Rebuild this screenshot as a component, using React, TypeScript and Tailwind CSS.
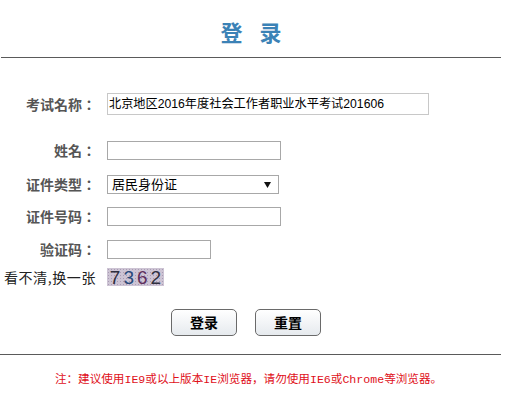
import React from "react";

const cjk = '"Noto Sans CJK SC", "Liberation Sans", sans-serif';
const labelFont = '"Noto Sans CJK TC", "Noto Sans CJK SC", sans-serif';
const fieldFont = '"Liberation Sans", "Noto Sans CJK SC", sans-serif';

const Label: React.FC<{ text: string; bold?: boolean }> = ({ text, bold = true }) => (
  <div
    className={`w-[96px] shrink-0 text-right text-[14px] leading-none whitespace-nowrap ${
      bold ? "font-bold text-[#555]" : "tracking-[0.6px] text-[#222]"
    }`}
    style={{ fontFamily: labelFont }}
  >
    {text}
  </div>
);

const Captcha: React.FC = () => (
  <div className="flex h-[18px] w-[57px] items-center justify-center bg-[#cdc4d4] bg-[radial-gradient(#a99bb4_1px,transparent_1px)] bg-[length:3px_3px] font-['Liberation_Sans'] text-[19px] leading-none tracking-[3px] pl-[3px]">
    <span className="text-[#2e2e3e]">7</span>
    <span className="text-[#28497a]">3</span>
    <span className="text-[#5e2f5c]">6</span>
    <span className="text-[#30303f]">2</span>
  </div>
);

export default function App() {
  return (
    <div className="w-[510px] h-[397px] bg-white" style={{ fontFamily: cjk }}>
      {/* 标题 */}
      <div className="ml-[1px] flex h-[58px] w-[500px] items-center justify-center gap-[17px] border-b border-[#5a5a5a] pt-[5px] text-[22px] font-bold text-[#3b82b6]">
        <span>登</span>
        <span>录</span>
      </div>

      {/* 表单 */}
      <div className="flex flex-col">
        <div className="mt-[35px] flex h-[22px] items-center gap-[11px]">
          <Label text="考试名称：" />
          <div
            className="flex h-[22px] w-[322px] items-center border border-[#c8c8c8] pl-[1px] text-[12.2px] text-black"
            style={{ fontFamily: fieldFont }}
          >
            北京地区2016年度社会工作者职业水平考试201606
          </div>
        </div>

        <div className="mt-[26px] flex h-[18px] items-center gap-[11px]">
          <Label text="姓名：" />
          <div className="h-[19px] w-[174px] border border-[#a8a8a8]" />
        </div>

        <div className="mt-[16px] flex h-[18px] items-center gap-[11px]">
          <Label text="证件类型：" />
          <div className="flex h-[19px] w-[172px] items-center justify-between border border-[#a8a8a8] pl-[4px] pr-[7px] text-[13px] text-black">
            <span>居民身份证</span>
            <svg width="7" height="7" viewBox="0 0 7 7">
              <path d="M0 1 H7 L3.5 7 Z" fill="#111" />
            </svg>
          </div>
        </div>

        <div className="mt-[14px] flex h-[18px] items-center gap-[11px]">
          <Label text="证件号码：" />
          <div className="h-[19px] w-[174px] border border-[#a8a8a8]" />
        </div>

        <div className="mt-[15px] flex h-[18px] items-center gap-[11px]">
          <Label text="验证码：" />
          <div className="h-[19px] w-[104px] border border-[#a8a8a8]" />
        </div>

        <div className="mt-[10px] flex h-[18px] items-center gap-[11px]">
          <Label text="看不清,换一张" bold={false} />
          <Captcha />
        </div>

        <div className="mt-[23px] flex gap-[18px] pl-[171px]">
          <button className="h-[27px] w-[66px] rounded-[5px] border border-[#6a6a6a] bg-gradient-to-b from-white to-[#e6eaee] text-[14px] font-bold text-black">
            登录
          </button>
          <button className="h-[27px] w-[66px] rounded-[5px] border border-[#6a6a6a] bg-gradient-to-b from-white to-[#e6eaee] text-[14px] font-bold text-black">
            重置
          </button>
        </div>
      </div>

      {/* 底部 */}
      <div className="mt-[18px] w-[501px] border-b border-[#5a5a5a]" />
      <div
        className="mt-[19px] w-[497px] text-center text-[11.6px] leading-none text-[#e0101a]"
        style={{ fontFamily: '"Liberation Mono", "Noto Sans CJK SC", monospace' }}
      >
        注：建议使用IE9或以上版本IE浏览器，请勿使用IE6或Chrome等浏览器。
      </div>
    </div>
  );
}
